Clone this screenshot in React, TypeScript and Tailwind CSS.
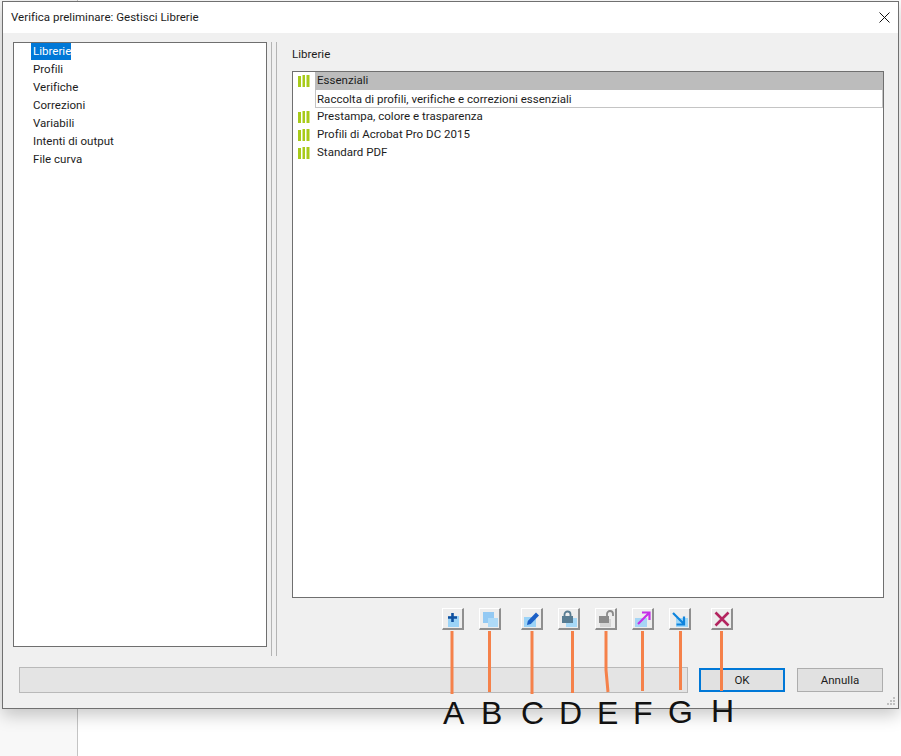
const navItems = ["Librerie", "Profili", "Verifiche", "Correzioni", "Variabili", "Intenti di output", "File curva"];
const libraries = ["Prestampa, colore e trasparenza", "Profili di Acrobat Pro DC 2015", "Standard PDF"];

const callouts = [
  { letter: "A", left: "left-[443px]", top: "top-[697px]" },
  { letter: "B", left: "left-[481px]", top: "top-[697px]" },
  { letter: "C", left: "left-[521px]", top: "top-[697px]" },
  { letter: "D", left: "left-[559px]", top: "top-[697px]" },
  { letter: "E", left: "left-[597px]", top: "top-[697px]" },
  { letter: "F", left: "left-[633px]", top: "top-[697px]" },
  { letter: "G", left: "left-[668px]", top: "top-[696px]" },
  { letter: "H", left: "left-[711px]", top: "top-[695px]" },
];

function LibraryIcon() {
  return (
    <svg width="13" height="12" viewBox="0 0 13 12" className="shrink-0">
      <rect x="0" y="1" width="3" height="11" fill="#a8cb1a" />
      <rect x="4.500" y="0" width="2.500" height="12" fill="#a8cb1a" />
      <rect x="8.500" y="0" width="3" height="12" fill="#a8cb1a" />
    </svg>
  );
}

function ToolButton({ children, className }: { children: React.ReactNode; className: string }) {
  return (
    <button className={`flex h-[22px] w-[22px] items-center justify-center border-r-2 border-b-2 border-t border-l border-r-[#8f8f8f] border-b-[#8f8f8f] border-t-white border-l-white bg-[#ededed] ${className}`}>
      <svg width="18" height="18" viewBox="0 0 18 18">
        {children}
      </svg>
    </button>
  );
}

function Toolbar() {
  return (
    <div className="flex h-[22px]">
      <ToolButton className="ml-[150px]">
        <rect x="4" y="6" width="11" height="11" fill="#9bd3f7" />
        <path d="M8.500 3v9M4 7.500h9" stroke="#10509f" strokeWidth="2.600" />
      </ToolButton>
      <ToolButton className="ml-[15px]">
        <rect x="2" y="2" width="11" height="11" fill="#93c9f3" />
        <rect x="7" y="8" width="10" height="9" fill="#aedaf7" />
      </ToolButton>
      <ToolButton className="ml-[20px]">
        <rect x="1" y="7" width="12" height="10" fill="#9bd3f7" />
        <path d="M4 15 4.800 11 13 2.500 16 5.500 7.800 14z" fill="#1b5fc6" />
      </ToolButton>
      <ToolButton className="ml-[15px]">
        <rect x="6" y="8" width="11" height="9" fill="#a6d8f7" />
        <path d="M4.500 7V4.500a3 3 0 0 1 6 0V7" fill="none" stroke="#587c92" strokeWidth="1.800" />
        <rect x="2" y="6" width="11" height="7" fill="#587c92" />
      </ToolButton>
      <ToolButton className="ml-[15px]">
        <rect x="3" y="9" width="11" height="8" fill="#d4d4d4" />
        <path d="M10 6V4a3 3 0 0 1 6 0V6" fill="none" stroke="#8a8a8a" strokeWidth="1.800" />
        <rect x="2" y="6" width="10" height="7" fill="#8a8a8a" />
      </ToolButton>
      <ToolButton className="ml-[15px]">
        <rect x="1" y="8" width="12" height="9" fill="#a6d5f5" />
        <path d="M4 14 15 3M8 2.500h7.500V10" fill="none" stroke="#c62fe8" strokeWidth="2.200" />
      </ToolButton>
      <ToolButton className="ml-[15px]">
        <rect x="5" y="8" width="12" height="9" fill="#9fd7f8" />
        <path d="M2 3 13 14M13 6.500V14.500H5.500" fill="none" stroke="#0f84dd" strokeWidth="2.200" />
      </ToolButton>
      <ToolButton className="ml-[20px]">
        <path d="M2.500 2.500 15.500 15.500M15.500 2.500 2.500 15.500" stroke="#b3245f" strokeWidth="2.600" />
      </ToolButton>
    </div>
  );
}

export default function App() {
  return (
    <div className="relative h-[756px] w-[901px] overflow-hidden bg-white font-['Roboto',sans-serif] text-[11.5px] leading-[16px] tracking-[0.02px] text-[#1c1c1c]">
      {/* app behind the dialog */}
      <div className="absolute top-0 bottom-0 left-0 w-[78px] border-r border-[#c4c4c4] bg-[#f8f8f8]" />

      <div className="relative mt-px ml-[2px] flex h-[708px] w-[897px] flex-col border border-[#707070] bg-[#f0f0f0] shadow-[0_6px_16px_rgba(0,0,0,0.22)]">
        <div className="flex h-[31px] shrink-0 items-center justify-between bg-white pr-[8px] pl-[8px]">
          <span className="pb-[2px]">Verifica preliminare: Gestisci Librerie</span>
          <svg width="11" height="11" viewBox="0 0 11 11">
            <path d="M0.500 0.500 10.500 10.500M10.500 0.500 0.500 10.500" stroke="#111" strokeWidth="1" />
          </svg>
        </div>

        <div className="flex pt-[9px]">
          <div className="ml-[10px] h-[605px] w-[254px] border border-[#6f6f6f] bg-white">
            <ul className="pl-[17px]">
              {navItems.map((item, i) => (
                <li key={item} className="h-[18px]">
                  <span className={i === 0 ? "inline-block h-[17px] bg-[#0078d7] pl-[2px] text-white" : "inline-block px-[2px]"}>
                    {item}
                  </span>
                </li>
              ))}
            </ul>
          </div>

          <div className="ml-[4px] h-[614px] w-[6px] border-x border-[#b4b4b4]" />

          <div className="ml-[15px] flex w-[592px] flex-col">
            <div className="mt-[4px] h-[17px]">Librerie</div>
            <div className="mt-[8px] h-[527px] border border-[#6f6f6f] bg-white">
              <div className="flex h-[18px] items-center pl-[5px]">
                <LibraryIcon />
                <div className="ml-[4px] h-full flex-1 bg-[#bcbcbc] pl-[2px]">Essenziali</div>
              </div>
              <div className="ml-[22px] h-[18px] border-x border-b border-[#c4c4c4] pt-px pl-px">
                Raccolta di profili, verifiche e correzioni essenziali
              </div>
              {libraries.map((name) => (
                <div key={name} className="flex h-[18px] items-center pl-[5px]">
                  <LibraryIcon />
                  <span className="ml-[6px] pb-[2px]">{name}</span>
                </div>
              ))}
            </div>
            <div className="mt-[10px]">
              <Toolbar />
            </div>
          </div>
        </div>

        <div className="mt-[11px] flex items-center">
          <div className="ml-[16px] h-[26px] w-[669px] border border-[#b9b9b9] bg-[#e4e4e4]" />
          <button className="ml-[11px] h-[24px] w-[86px] border-2 border-[#0078d7] bg-[#e1e1e1]">OK</button>
          <button className="ml-[12px] h-[24px] w-[86px] border border-[#adadad] bg-[#e1e1e1]">Annulla</button>
        </div>

        {/* resize grip */}
        <svg width="10" height="10" viewBox="0 0 10 10" className="absolute right-[2px] bottom-[2px]">
          <path d="M7 1h2v2H7zM4 4h2v2H4zM7 4h2v2H7zM1 7h2v2H1zM4 7h2v2H4zM7 7h2v2H7z" fill="#c0c0c0" />
        </svg>
      </div>

      {/* annotation lines and letters drawn over the screenshot */}
      <svg width="901" height="756" className="pointer-events-none absolute top-0 left-0">
        <g fill="none" stroke="#f5814a" strokeWidth="3">
          <path d="M452 631V694" />
          <path d="M489.500 631V692" />
          <path d="M532 631V694" />
          <path d="M572.500 631V693" />
          <path d="M606 631V670L608 692" />
          <path d="M642.500 631V691" />
          <path d="M680.500 631V690" />
          <path d="M721.500 631V691" />
        </g>
      </svg>
      {callouts.map((c) => (
        <span key={c.letter} className={`absolute ${c.left} ${c.top} font-['Liberation_Sans',sans-serif] text-[32px] leading-[32px] tracking-normal text-[#111]`}>
          {c.letter}
        </span>
      ))}
    </div>
  );
}
